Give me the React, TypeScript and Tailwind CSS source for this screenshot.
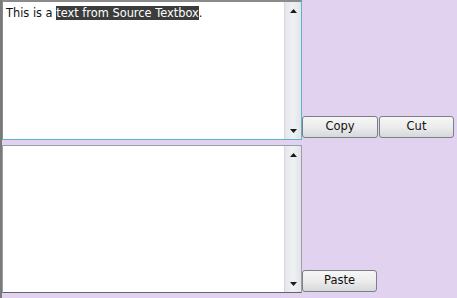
import React from 'react';

function ScrollArrow({ up }: { up: boolean }) {
  return (
    <div className="h-[17px] flex items-center justify-center">
      <svg width="7" height="4" viewBox="0 0 7 4">
        {up ? <polygon points="3.5,0 7,4 0,4" fill="#1a1a1a" /> : <polygon points="0,0 7,0 3.5,4" fill="#1a1a1a" />}
      </svg>
    </div>
  );
}

function ScrollBar() {
  return (
    <div className="w-[17px] h-full flex flex-col justify-between border-l border-[#d6d8dc] bg-gradient-to-r from-[#e4e6ea] via-[#f0f1f3] to-[#e2e4e8]">
      <ScrollArrow up />
      <ScrollArrow up={false} />
    </div>
  );
}

function Button({ label, w }: { label: string; w: string }) {
  return (
    <button
      className={`${w} h-[22px] rounded-[3px] border border-[#7b7f86] bg-gradient-to-b from-[#f6f6f6] via-[#ececec] to-[#d6d8db] text-[11.5px] text-[#111] leading-none`}
    >
      {label}
    </button>
  );
}

export default function App() {
  return (
    <div
      className="w-[457px] h-[298px] bg-[#e1d3ef] border-l-2 border-[#7a7a7a] overflow-hidden"
      style={{ fontFamily: '"DejaVu Sans", Verdana, sans-serif' }}
    >
      <div className="flex items-end">
        <div className="w-[300px] h-[140px] flex bg-white border-t-2 border-l border-r border-b border-t-[#8a8a8a] border-l-[#8a8a8a] border-r-[#5db3c8] border-b-[#5db3c8]">
          <div className="flex-1 px-[3px] pt-[3px] text-[11.4px] leading-[16px] text-[#111]">
            This is a <span className="bg-[#3c3c3c] text-white">text from Source Textbox</span>.
          </div>
          <ScrollBar />
        </div>
        <div className="flex gap-[1px] mb-[2px]">
          <Button label="Copy" w="w-[76px]" />
          <Button label="Cut" w="w-[75px]" />
        </div>
      </div>
      <div className="flex items-end mt-[5px]">
        <div className="w-[300px] h-[148px] flex bg-white border border-[#9aa0a8] border-b-[#5b6470]">
          <div className="flex-1" />
          <ScrollBar />
        </div>
        <div className="mb-[1px]">
          <Button label="Paste" w="w-[75px]" />
        </div>
      </div>
    </div>
  );
}
